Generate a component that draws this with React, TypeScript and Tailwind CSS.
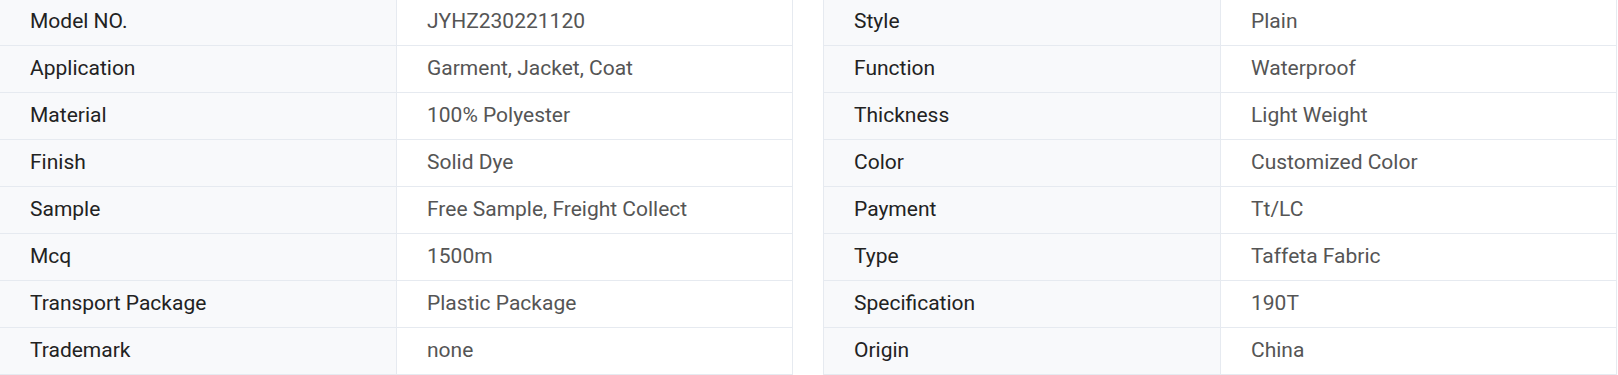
const left: [string, string][] = [
  ["Model NO.", "JYHZ230221120"],
  ["Application", "Garment, Jacket, Coat"],
  ["Material", "100% Polyester"],
  ["Finish", "Solid Dye"],
  ["Sample", "Free Sample, Freight Collect"],
  ["Mcq", "1500m"],
  ["Transport Package", "Plastic Package"],
  ["Trademark", "none"],
];

const right: [string, string][] = [
  ["Style", "Plain"],
  ["Function", "Waterproof"],
  ["Thickness", "Light Weight"],
  ["Color", "Customized Color"],
  ["Payment", "Tt/LC"],
  ["Type", "Taffeta Fabric"],
  ["Specification", "190T"],
  ["Origin", "China"],
];

const SpecTable = ({ rows, className }: { rows: [string, string][]; className: string }) => {
  return (
    <div className={`flex flex-col border-r border-[#e6eaf0] ${className}`}>
      {rows.map(([label, value]) => (
        <div key={label} className="flex h-[47px] border-b border-[#e6eaf0]">
          <div className="flex items-center w-[397px] pl-[30px] pb-[3px] bg-[#f8f9fb] border-r border-[#e6eaf0] text-[#222222]">
            {label}
          </div>
          <div className="flex items-center flex-1 pl-[30px] pb-[3px] bg-white text-[#555555]">{value}</div>
        </div>
      ))}
    </div>
  );
};

export default function App() {
  return (
    <div className="h-[375px] w-[1618px] overflow-hidden bg-white">
      <div
        className="flex -mt-px text-[21px] leading-[24px]"
        style={{ fontFamily: "Roboto, 'Noto Sans', sans-serif" }}
      >
        <SpecTable rows={left} className="w-[793px]" />
        <SpecTable rows={right} className="w-[794px] ml-[30px] border-l" />
      </div>
    </div>
  );
}
